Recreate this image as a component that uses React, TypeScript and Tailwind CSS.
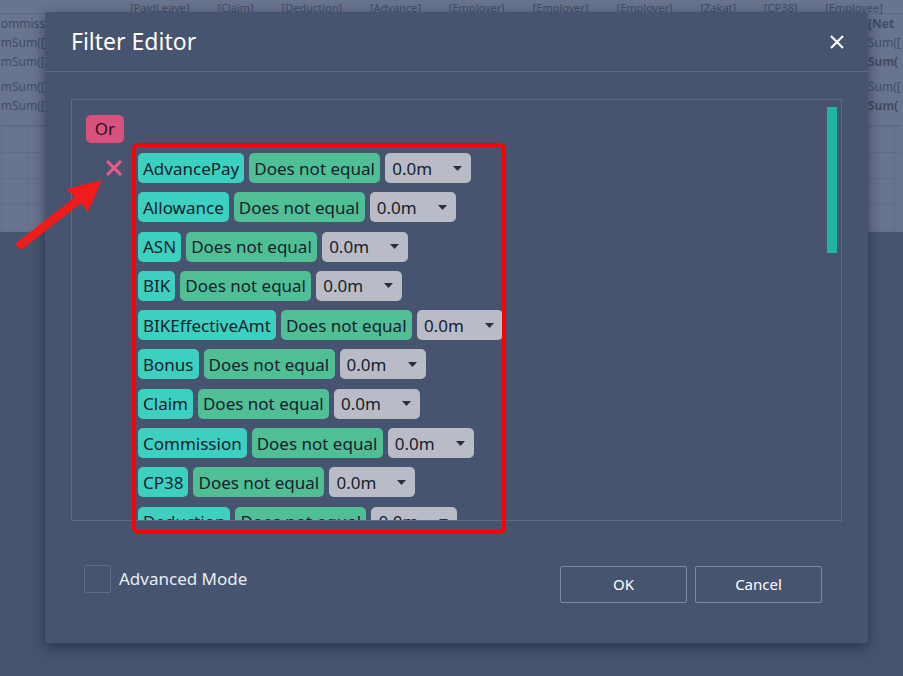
import * as React from 'react';

type FilterRow = {
    field: string;
};

const ROWS: FilterRow[] = [
    { field: 'AdvancePay' },
    { field: 'Allowance' },
    { field: 'ASN' },
    { field: 'BIK' },
    { field: 'BIKEffectiveAmt' },
    { field: 'Bonus' },
    { field: 'Claim' },
    { field: 'Commission' },
    { field: 'CP38' },
    { field: 'Deduction' }
];

const TOP_LABELS = ['[PaidLeave]', '[Claim]', '[Deduction]', '[Advance]', '[Employer]', '[Employer]', '[Employer]', '[Zakat]', '[CP38]', '[Employee]'];

const FONT = { fontFamily: '"Noto Sans", "Open Sans", sans-serif' };

function Chip({ className, children }: { className: string; children: React.ReactNode }) {
    return (
        <div className={`flex h-[30px] shrink-0 items-center rounded-[5px] px-[5px] text-[17px] leading-none text-[#16222c] ${className}`}>
            {children}
        </div>
    );
}

function ValueChip() {
    return (
        <div className="flex h-[30px] w-[86px] shrink-0 items-center justify-between rounded-[5px] bg-[#b9bcc6] pl-[7px] pr-[9px] text-[17px] leading-none text-[#16222c]">
            <span>0.0m</span>
            <svg width="9" height="5" viewBox="0 0 9 5" aria-hidden="true">
                <path d="M0 0h9L4.5 5z" fill="#2a2f38" />
            </svg>
        </div>
    );
}

function SideStrip({ lines, bold }: { lines: string[]; bold: boolean[] }) {
    return (
        <div className="flex flex-col leading-[19px]">
            {lines.map((line, index) => (
                <span key={index} className={`whitespace-nowrap ${bold[index] ? 'font-bold' : ''} ${index === 3 ? 'mt-[6px]' : ''}`}>
                    {line}
                </span>
            ))}
            <div className="mt-[10px] h-[118px] border-t border-[#5d6882] bg-[linear-gradient(#616c86_1px,transparent_1px),linear-gradient(90deg,#616c86_1px,transparent_1px)] bg-[size:26px_26px]" />
        </div>
    );
}

function Background() {
    return (
        <div className="flex h-full w-full flex-col">
            <div className="flex h-[232px] flex-col bg-[#69748e] text-[12px] text-[#414c66]">
                <div className="flex h-[14px] shrink-0 items-end justify-between border-b border-[#5d6882] pl-[130px] pr-[20px] text-[11px] leading-none">
                    {TOP_LABELS.map((label, index) => (
                        <span key={index} className="whitespace-nowrap">{label}</span>
                    ))}
                </div>
                <div className="flex flex-1 justify-between">
                    <div className="flex w-[45px] justify-end">
                        <SideStrip lines={['ommiss', 'mSum([', 'mSum([', 'mSum([', 'mSum([']} bold={[false, false, false, false, false]} />
                    </div>
                    <div className="flex w-[35px]">
                        <SideStrip lines={['[Net', 'Sum([', 'Sum(', 'Sum([', 'Sum(']} bold={[true, false, true, false, true]} />
                    </div>
                </div>
            </div>
            <div className="flex-1 bg-[#46546e]" />
        </div>
    );
}

export default function App() {
    return (
        <div className="relative h-[676px] w-[903px] overflow-hidden" style={FONT}>
            <Background />

            <div className="absolute left-[45px] top-[12px] flex h-[631px] w-[823px] flex-col rounded-[3px] bg-[#46546f] shadow-[0_4px_14px_rgba(20,28,45,0.55)]">
                <div className="flex h-[60px] shrink-0 items-center justify-between border-b border-[#5b6984] pl-[26px] pr-[23px]">
                    <span className="text-[23px] text-white">Filter Editor</span>
                    <svg width="16" height="16" viewBox="0 0 16 16" aria-hidden="true">
                        <path d="M2 2l12 12M14 2L2 14" stroke="#ffffff" strokeWidth="2.2" />
                    </svg>
                </div>

                <div className="flex flex-1 flex-col px-[26px] pt-[27px]">
                    <div className="flex h-[422px] shrink-0 overflow-hidden border border-[#5d6b86]">
                        <div className="flex flex-1 flex-col pl-[14px] pt-[15px]">
                            <div className="flex h-[28px] w-[38px] shrink-0 items-center justify-center rounded-[5px] bg-[#d9527d] text-[17px] text-[#2a1420]">
                                Or
                            </div>
                            <div className="mt-[10px] flex shrink-0">
                                <div className="w-[52px] shrink-0 pl-[19px] pt-[6px]">
                                    <svg width="18" height="18" viewBox="0 0 18 18" aria-hidden="true">
                                        <path d="M2 2l14 14M16 2L2 16" stroke="#ef5a86" strokeWidth="3" />
                                    </svg>
                                </div>
                                <div className="flex flex-col gap-[9.3px]">
                                    {ROWS.map((row) => (
                                        <div key={row.field} className="flex shrink-0 gap-[5px]">
                                            <Chip className="bg-[#3dcfc0]">{row.field}</Chip>
                                            <Chip className="w-[131px] bg-[#50bf96]">Does not equal</Chip>
                                            <ValueChip />
                                        </div>
                                    ))}
                                </div>
                            </div>
                        </div>
                        <div className="w-[14px] shrink-0 pt-[7px]">
                            <div className="h-[146px] w-[10px] bg-[#1eb4a0]" />
                        </div>
                    </div>

                    <div className="mt-[44px] flex items-start justify-between pl-[13px] pr-[20px]">
                        <div className="flex items-center gap-[8px]">
                            <div className="h-[28px] w-[27px] rounded-[2px] border border-[#5f6d88]" />
                            <span className="text-[17px] text-[#e9edf3]">Advanced Mode</span>
                        </div>
                        <div className="mt-[1px] flex gap-[8px]">
                            <button type="button" className="h-[37px] w-[127px] rounded-[2px] border border-[#7d8aa4] text-[15px] text-white">
                                OK
                            </button>
                            <button type="button" className="h-[37px] w-[127px] rounded-[2px] border border-[#7d8aa4] text-[15px] text-white">
                                Cancel
                            </button>
                        </div>
                    </div>
                </div>
            </div>

            <div className="pointer-events-none absolute left-[132px] top-[143px] h-[391px] w-[374px] rounded-[6px] border-4 border-[#ff0000]" />

            <svg className="pointer-events-none absolute left-0 top-[160px]" width="120" height="100" viewBox="0 0 120 100" aria-hidden="true">
                <path d="M102 20L66 29l9 8L15 84l6 6 60-47 7 9z" fill="#f21b1b" />
            </svg>
        </div>
    );
}
